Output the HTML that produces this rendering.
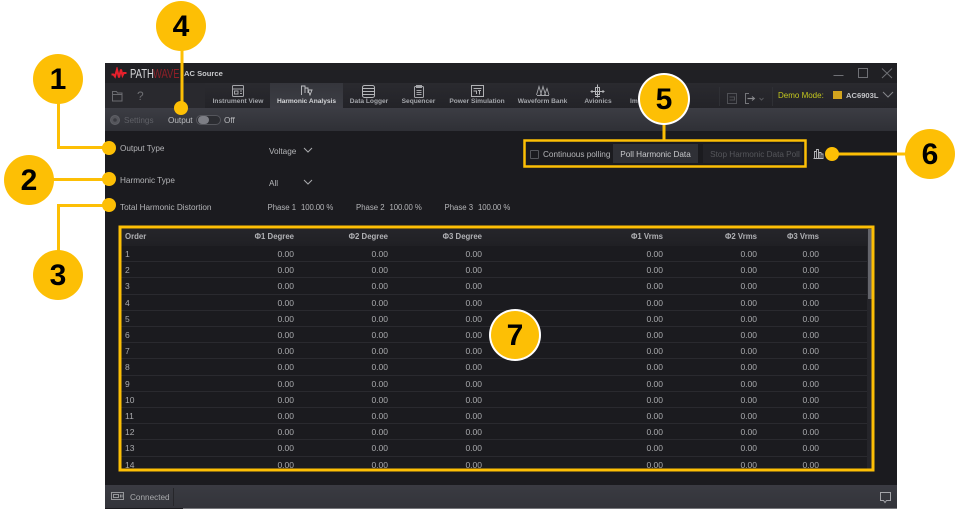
<!DOCTYPE html>
<html><head><meta charset="utf-8">
<style>
html,body{margin:0;padding:0;background:#fff;}
body{width:959px;height:509px;position:relative;overflow:hidden;font-family:"Liberation Sans",sans-serif;}
.a{position:absolute;white-space:nowrap;}
.t{position:absolute;white-space:nowrap;font-size:8.2px;line-height:12px;color:#b4b5b8;}
.tab{position:absolute;top:97px;font-size:6.6px;line-height:10px;font-weight:bold;color:#a3a5aa;white-space:nowrap;transform:translateX(-50%);}
.row{position:absolute;left:121px;width:747px;height:16.2px;border-bottom:1px solid #2a2a2f;box-sizing:border-box;}
.row span{position:absolute;top:2px;font-size:8.5px;line-height:12px;color:#a9aaad;white-space:nowrap;}
.c0{left:4px;}
.c1{right:574px;}.c2{right:480px;}.c3{right:386px;}.c4{right:205px;}.c5{right:111px;}.c6{right:49px;}
.hd span{color:#b0b1b5;font-weight:bold;font-size:7.8px;top:2px;}
.n{position:absolute;border-radius:50%;background:#fdbf05;font-weight:bold;color:#000;text-align:center;font-size:30px;width:50px;height:50px;line-height:52px;}
</style></head>
<body>
<!-- window -->
<div class="a" style="left:105px;top:63px;width:792px;height:446px;background:#1b1b1f;"></div>
<div class="a" style="left:105px;top:63px;width:792px;height:20px;background:#202024;"></div>
<div class="a" style="left:105px;top:83px;width:792px;height:25px;background:linear-gradient(#2a2a2f,#232328);"></div>
<div class="a" style="left:105px;top:83px;width:100px;height:25px;background:#29292e;"></div>
<div class="a" style="left:105px;top:108px;width:792px;height:23px;background:linear-gradient(#3c3d44,#2f3036);"></div>
<div class="a" style="left:270px;top:83px;width:73px;height:25px;background:linear-gradient(#35363c,#3c3d44);"></div>
<div class="a" style="left:105px;top:485px;width:792px;height:23px;background:linear-gradient(#3a3b42,#33343a);"></div>
<div class="a" style="left:173px;top:488px;width:1px;height:18px;background:#26262a;"></div>
<div class="a" style="left:183px;top:508px;width:714px;height:1px;background:#77787c;"></div>

<!-- title -->
<svg class="a" style="left:111px;top:67px" width="16" height="13" viewBox="0 0 16 13"><path d="M.5 7.500h2l1.500 2L6 2.500 8 10.500 10 2.500l1.500 6 1.300-2.500h2.700" fill="none" stroke="#e8202c" stroke-width="2"/></svg>
<div class="a" style="left:130px;top:66px;font-size:13px;line-height:15px;color:#d8d8da;transform:scaleX(.73);transform-origin:0 0;">PATH</div>
<div class="a" style="left:153px;top:66px;font-size:13px;line-height:15px;color:#8f1f28;transform:scaleX(.72);transform-origin:0 0;">WAVE</div>
<div class="a" style="left:184px;top:68px;font-size:7.6px;line-height:12px;font-weight:bold;color:#c8c9cc;">AC Source</div>
<svg class="a" style="left:830px;top:66px" width="66" height="16" viewBox="0 0 66 16" fill="none" stroke="#6f7075" stroke-width="1"><path d="M3.500 9.500h10"/><rect x="28.500" y="2.500" width="9" height="9"/><path d="M52 2.500l10 9.500M62 2.500l-10 9.500"/></svg>

<!-- toolbar left icons -->
<svg class="a" style="left:111px;top:90px" width="14" height="14" viewBox="0 0 14 14" fill="none" stroke="#6a6b70" stroke-width="1"><path d="M1.500 1.500h4l1 1.500h4.500v8h-9.500zM1.500 4.500h9.500"/></svg>
<div class="a" style="left:137px;top:89px;font-size:12px;line-height:14px;color:#6d6e72;">?</div>

<!-- tabs -->
<svg class="a" style="left:231px;top:85px" width="14" height="13" viewBox="0 0 14 13" fill="none" stroke="#a4a5a9"><rect x="1.500" y=".5" width="11" height="11" rx="1"/><path d="M1.500 4h11M3.500 6h3.500v3H3.500zM9 6h2M9 8.500h2"/></svg>
<div class="tab" style="left:238px;">Instrument View</div>
<svg class="a" style="left:300px;top:85px" width="14" height="12" viewBox="0 0 14 12" fill="none" stroke="#c3c4c7" stroke-width=".9"><path d="M1.500 10V1h3.500v7M5 3h3v5M8 5h4l-2 5-2-5"/></svg>
<div class="tab" style="left:306.500px;color:#d4d5d8;">Harmonic Analysis</div>
<svg class="a" style="left:362px;top:85px" width="13" height="13" viewBox="0 0 13 13" fill="none" stroke="#b5b6b9"><rect x=".5" y=".5" width="12" height="12" rx="2"/><path d="M.5 3.500h12M.5 6.500h12M.5 9.500h12"/></svg>
<div class="tab" style="left:369px;">Data Logger</div>
<svg class="a" style="left:413px;top:85px" width="12" height="13" viewBox="0 0 12 13" fill="none" stroke="#a4a5a9"><rect x="1.500" y="1.500" width="9" height="11" rx="1"/><path d="M3.500.5h5v2h-5zM3.500 5.500h5M3.500 7.500h5M3.500 9.500h5"/></svg>
<div class="tab" style="left:418.500px;">Sequencer</div>
<svg class="a" style="left:471px;top:85px" width="13" height="13" viewBox="0 0 13 13" fill="none" stroke="#b0b1b4"><rect x=".5" y=".5" width="12" height="11"/><path d="M2.500 3.500h8M2.500 6h3v3M7 5.500h3M8.500 5.500v4"/></svg>
<div class="tab" style="left:477px;">Power Simulation</div>
<svg class="a" style="left:536px;top:85px" width="14" height="12" viewBox="0 0 14 12" fill="none" stroke="#a4a5a9" stroke-width=".9"><path d="M.5 10L3 1.500 5.500 10M4.500 10L7 1.500 9.500 10M8.500 10L11 3.500 13 10M1 10.500h12"/></svg>
<div class="tab" style="left:542.500px;">Waveform Bank</div>
<svg class="a" style="left:590px;top:84px" width="15" height="14" viewBox="0 0 15 14" fill="none" stroke="#b5b6b9"><path d="M7.500.5v13M5.500 3.500v7h4v-7zM.5 7.500h14M2 6v3M13 6v3M5 12.500h5"/></svg>
<div class="tab" style="left:598px;">Avionics</div>
<div class="tab" style="left:630px;transform:none;">Im</div>

<!-- toolbar right -->
<div class="a" style="left:719px;top:87px;width:1px;height:19px;background:#2f3035;"></div>
<svg class="a" style="left:727px;top:93px" width="40" height="12" viewBox="0 0 40 12" fill="none" stroke="#4f5055"><rect x=".5" y=".5" width="9" height="10"/><path d="M2.500 4h5v3h-5"/><path d="M22 .5h-3.500v10H22" stroke="#75767a"/><path d="M20.500 5.500h6" stroke="#8a8b8f" stroke-width="1.200"/><path d="M25 3.500l2.500 2-2.500 2" stroke="#8a8b8f"/><path d="M32.500 5l2 2 2-2" stroke="#55565b"/></svg>
<div class="a" style="left:772px;top:87px;width:1px;height:19px;background:#2f3035;"></div>
<div class="a" style="left:778px;top:90px;font-size:8px;line-height:12px;color:#c4c81e;">Demo Mode:</div>
<div class="a" style="left:833px;top:91px;width:9px;height:8px;background:#d2a41e;"></div>
<div class="a" style="left:846px;top:90px;font-size:7.6px;line-height:12px;font-weight:bold;color:#c3c4c7;">AC6903L</div>
<svg class="a" style="left:882px;top:91px" width="12" height="8" viewBox="0 0 12 8" fill="none" stroke="#85868a"><path d="M1 1l5 5 5-5"/></svg>

<!-- ribbon -->
<svg class="a" style="left:109px;top:114px" width="12" height="12" viewBox="0 0 12 12"><circle cx="6" cy="6" r="4.500" fill="#55565c" stroke="#5f6066"/><circle cx="6" cy="6" r="1.800" fill="#3a3b41"/></svg>
<div class="t" style="left:124px;top:115px;color:#5f6066;">Settings</div>
<div class="t" style="left:168px;top:115px;color:#b9babd;">Output</div>
<div class="a" style="left:196px;top:115px;width:23px;height:8px;border:1px solid #55565c;border-radius:6px;background:#2c2d32;"></div>
<div class="a" style="left:198px;top:116px;width:11px;height:8px;border-radius:4px;background:#7d7e85;"></div>
<div class="t" style="left:224px;top:115px;color:#b9babd;">Off</div>

<!-- form -->
<div class="t" style="left:120px;top:143px;">Output Type</div>
<div class="t" style="left:269px;top:146px;">Voltage</div>
<svg class="a" style="left:303px;top:147px" width="10" height="7" viewBox="0 0 10 7" fill="none" stroke="#a9aaad"><path d="M1 1l4 4 4-4"/></svg>
<div class="t" style="left:120px;top:175px;">Harmonic Type</div>
<div class="t" style="left:269px;top:178px;">All</div>
<svg class="a" style="left:303px;top:179px" width="10" height="7" viewBox="0 0 10 7" fill="none" stroke="#a9aaad"><path d="M1 1l4 4 4-4"/></svg>
<div class="t" style="left:120px;top:202px;">Total Harmonic Distortion</div>
<div class="t" style="left:267.500px;top:202px;font-size:7.8px;">Phase 1</div><div class="t" style="left:301px;top:202px;font-size:7.8px;letter-spacing:-.1px;">100.00 %</div>
<div class="t" style="left:356px;top:202px;font-size:7.8px;">Phase 2</div><div class="t" style="left:389.500px;top:202px;font-size:7.8px;letter-spacing:-.1px;">100.00 %</div>
<div class="t" style="left:444.500px;top:202px;font-size:7.8px;">Phase 3</div><div class="t" style="left:478px;top:202px;font-size:7.8px;letter-spacing:-.1px;">100.00 %</div>

<!-- polling -->
<div class="a" style="left:530px;top:150px;width:7px;height:7px;border:1px solid #55565b;border-radius:1px;"></div>
<div class="t" style="left:543px;top:149px;">Continuous polling</div>
<div class="a" style="left:613px;top:144px;width:85px;height:19px;background:#2f3036;color:#c9cacd;font-size:8.2px;line-height:21px;text-align:center;">Poll Harmonic Data</div>
<div class="a" style="left:703px;top:144px;width:94px;padding-left:5px;height:19px;background:#232328;color:#55565b;font-size:8.2px;line-height:21px;text-align:center;">Stop Harmonic Data Poll</div>
<svg class="a" style="left:813px;top:148px" width="11" height="11" viewBox="0 0 11 11" fill="none" stroke="#b8b9bc" stroke-width=".9"><path d="M.5 10.500h10M1.500 10V3.500h2V10M3.500 10V1.500h2V10M6 10V4.500h2V10M8 10V6h2v4"/></svg>

<!-- table -->
<div class="a" style="left:121px;top:229px;width:747px;height:17px;background:linear-gradient(#25252a,#202024);"></div>
<div class="row hd" style="top:229px;height:17px;border:0;"><span class="c0">Order</span><span class="c1">Φ1 Degree</span><span class="c2">Φ2 Degree</span><span class="c3">Φ3 Degree</span><span class="c4">Φ1 Vrms</span><span class="c5">Φ2 Vrms</span><span class="c6">Φ3 Vrms</span></div>
<div class="row" style="top:246px;"><span class="c0">1</span><span class="c1">0.00</span><span class="c2">0.00</span><span class="c3">0.00</span><span class="c4">0.00</span><span class="c5">0.00</span><span class="c6">0.00</span></div>
<div class="row" style="top:262.200px;"><span class="c0">2</span><span class="c1">0.00</span><span class="c2">0.00</span><span class="c3">0.00</span><span class="c4">0.00</span><span class="c5">0.00</span><span class="c6">0.00</span></div>
<div class="row" style="top:278.400px;"><span class="c0">3</span><span class="c1">0.00</span><span class="c2">0.00</span><span class="c3">0.00</span><span class="c4">0.00</span><span class="c5">0.00</span><span class="c6">0.00</span></div>
<div class="row" style="top:294.600px;"><span class="c0">4</span><span class="c1">0.00</span><span class="c2">0.00</span><span class="c3">0.00</span><span class="c4">0.00</span><span class="c5">0.00</span><span class="c6">0.00</span></div>
<div class="row" style="top:310.800px;"><span class="c0">5</span><span class="c1">0.00</span><span class="c2">0.00</span><span class="c3">0.00</span><span class="c4">0.00</span><span class="c5">0.00</span><span class="c6">0.00</span></div>
<div class="row" style="top:327px;"><span class="c0">6</span><span class="c1">0.00</span><span class="c2">0.00</span><span class="c3">0.00</span><span class="c4">0.00</span><span class="c5">0.00</span><span class="c6">0.00</span></div>
<div class="row" style="top:343.200px;"><span class="c0">7</span><span class="c1">0.00</span><span class="c2">0.00</span><span class="c3">0.00</span><span class="c4">0.00</span><span class="c5">0.00</span><span class="c6">0.00</span></div>
<div class="row" style="top:359.400px;"><span class="c0">8</span><span class="c1">0.00</span><span class="c2">0.00</span><span class="c3">0.00</span><span class="c4">0.00</span><span class="c5">0.00</span><span class="c6">0.00</span></div>
<div class="row" style="top:375.600px;"><span class="c0">9</span><span class="c1">0.00</span><span class="c2">0.00</span><span class="c3">0.00</span><span class="c4">0.00</span><span class="c5">0.00</span><span class="c6">0.00</span></div>
<div class="row" style="top:391.800px;"><span class="c0">10</span><span class="c1">0.00</span><span class="c2">0.00</span><span class="c3">0.00</span><span class="c4">0.00</span><span class="c5">0.00</span><span class="c6">0.00</span></div>
<div class="row" style="top:408px;"><span class="c0">11</span><span class="c1">0.00</span><span class="c2">0.00</span><span class="c3">0.00</span><span class="c4">0.00</span><span class="c5">0.00</span><span class="c6">0.00</span></div>
<div class="row" style="top:424.200px;"><span class="c0">12</span><span class="c1">0.00</span><span class="c2">0.00</span><span class="c3">0.00</span><span class="c4">0.00</span><span class="c5">0.00</span><span class="c6">0.00</span></div>
<div class="row" style="top:440.400px;"><span class="c0">13</span><span class="c1">0.00</span><span class="c2">0.00</span><span class="c3">0.00</span><span class="c4">0.00</span><span class="c5">0.00</span><span class="c6">0.00</span></div>
<div class="row" style="top:456.600px;height:13px;border:0;overflow:hidden;"><span class="c0">14</span><span class="c1">0.00</span><span class="c2">0.00</span><span class="c3">0.00</span><span class="c4">0.00</span><span class="c5">0.00</span><span class="c6">0.00</span></div>
<div class="a" style="left:867px;top:229px;width:5px;height:240px;background:#25252a;"></div>
<div class="a" style="left:868px;top:229px;width:4px;height:70px;background:#64656b;"></div>

<!-- status -->
<svg class="a" style="left:111px;top:492px" width="14" height="9" viewBox="0 0 14 9" fill="none" stroke="#95969a"><rect x=".5" y=".5" width="12" height="7"/><rect x="2.500" y="2.500" width="5" height="3"/><path d="M9.500 2.500v3M11 2.500v3"/></svg>
<div class="t" style="left:130px;top:492px;color:#a9aaad;">Connected</div>
<svg class="a" style="left:879px;top:491px" width="13" height="13" viewBox="0 0 13 13" fill="none" stroke="#a4a5a9"><path d="M1.500 1.500h10v8H7.500L6 11.500 4.500 9.500h-3z"/></svg>

<!-- annotations -->
<svg class="a" style="left:0;top:0" width="959" height="509" fill="none" stroke="#fdbf05" stroke-width="3">
<path d="M58.500 100v47.500H109"/>
<path d="M50 179.500h59"/>
<path d="M58.500 255V205.500H109"/>
<path d="M182 45v63"/>
<path d="M664 120v20"/>
<path d="M832 154h75"/>
<rect x="524.500" y="140.500" width="281" height="26" stroke-width="2.500"/>
<rect x="120" y="227" width="753" height="243" stroke-width="3"/>
<g fill="#fdbf05" stroke="none">
<circle cx="109" cy="148" r="7"/><circle cx="109" cy="179" r="7"/><circle cx="109" cy="205" r="7"/><circle cx="181" cy="108" r="7"/><circle cx="832" cy="154" r="7"/>
</g>
</svg>
<div class="n" style="left:33px;top:54px;">1</div>
<div class="n" style="left:4px;top:155px;">2</div>
<div class="n" style="left:33px;top:250px;">3</div>
<div class="n" style="left:156px;top:1px;">4</div>
<div class="n" style="left:640px;top:75px;width:48px;height:48px;line-height:50px;box-shadow:0 0 0 2px #fff;">5</div>
<div class="n" style="left:905px;top:129px;">6</div>
<div class="n" style="left:491px;top:311px;width:48px;height:48px;line-height:50px;box-shadow:0 0 0 2px #fff;">7</div>
</body></html>
